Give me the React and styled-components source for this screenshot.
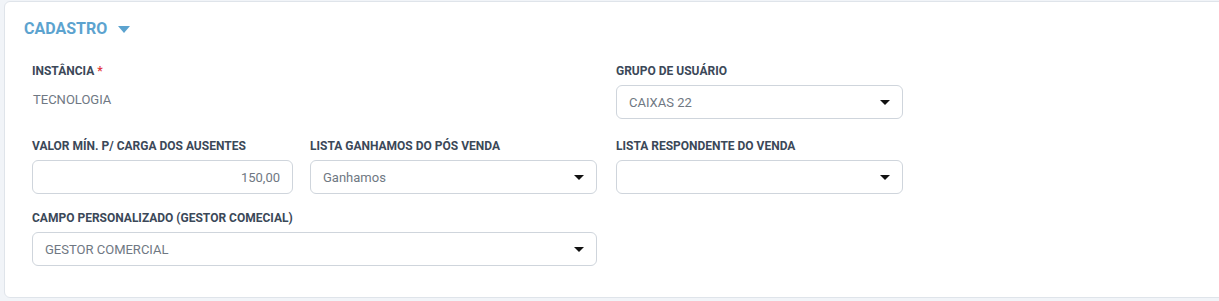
import React from 'react';
import styled, { createGlobalStyle } from 'styled-components';

const GlobalStyle = createGlobalStyle`
  html, body {
    margin: 0;
    padding: 0;
    background: #f1f4f8;
    font-family: Roboto, "Liberation Sans", Arial, sans-serif;
    overflow: hidden;
  }
`;

function Field({ label, required, children, width }) {
  return (
    <FieldWrap $width={width}>
      <Label>
        {label}
        {required && <Required> *</Required>}
      </Label>
      {children}
    </FieldWrap>
  );
}

function Select({ value }) {
  return (
    <SelectBox>
      <SelectValue>{value}</SelectValue>
      <Arrow />
    </SelectBox>
  );
}

function App() {
  return (
    <>
      <GlobalStyle />
      <Card>
        <Header>
          <Title>CADASTRO</Title>
          <Caret />
        </Header>

        <Row $mb={20}>
          <Field label="INSTÂNCIA" required width={565}>
            <StaticValue>TECNOLOGIA</StaticValue>
          </Field>
          <Field label="GRUPO DE USUÁRIO" width={287}>
            <Select value="CAIXAS 22" />
          </Field>
        </Row>

        <Row $mb={17}>
          <Half>
            <Field label="VALOR MÍN. P/ CARGA DOS AUSENTES" width={261}>
              <TextInput>150,00</TextInput>
            </Field>
            <Field label="LISTA GANHAMOS DO PÓS VENDA" width={287}>
              <Select value="Ganhamos" />
            </Field>
          </Half>
          <Field label="LISTA RESPONDENTE DO VENDA" width={287}>
            <Select value="" />
          </Field>
        </Row>

        <Row $mb={0}>
          <Field label="CAMPO PERSONALIZADO (GESTOR COMECIAL)" width={565}>
            <Select value="GESTOR COMERCIAL" />
          </Field>
        </Row>
      </Card>
    </>
  );
}

export default App;

const Card = styled.div`
  box-sizing: border-box;
  width: 1240px;
  height: 297px;
  margin: 1px 0 0 4px;
  padding: 17px 0 0 27px;
  background: #ffffff;
  border: 1px solid #dfe4ea;
  border-radius: 6px;
`;

const Header = styled.div`
  display: flex;
  align-items: center;
  gap: 11px;
  margin-left: -8px;
  margin-bottom: 25px;
  height: 20px;
`;

const Title = styled.span`
  font-size: 16px;
  font-weight: 700;
  color: #5ca3cf;
  line-height: 20px;
`;

const Caret = styled.span`
  width: 0;
  height: 0;
  margin-top: 1px;
  border-left: 6px solid transparent;
  border-right: 6px solid transparent;
  border-top: 7px solid #5ca3cf;
`;

const Row = styled.div`
  display: flex;
  gap: 19px;
  margin-bottom: ${p => p.$mb}px;
`;

const Half = styled.div`
  display: flex;
  gap: 17px;
  width: 565px;
`;

const FieldWrap = styled.div`
  display: flex;
  flex-direction: column;
  width: ${p => p.$width}px;
`;

const Label = styled.label`
  font-size: 12px;
  font-weight: 700;
  line-height: 14px;
  color: #3b4858;
  margin-bottom: 7px;
  white-space: nowrap;
`;

const Required = styled.span`
  color: #e0383e;
`;

const StaticValue = styled.div`
  font-size: 13px;
  line-height: 34px;
  height: 34px;
  margin-top: -2px;
  padding-left: 1px;
  color: #6f7883;
`;

const boxBase = `
  box-sizing: border-box;
  height: 34px;
  border: 1px solid #cfd5dc;
  border-radius: 6px;
  background: #ffffff;
  font-size: 13px;
  color: #6f7883;
  display: flex;
  align-items: center;
`;

const TextInput = styled.div`
  ${boxBase}
  justify-content: flex-end;
  padding: 0 12px;
`;

const SelectBox = styled.div`
  ${boxBase}
  justify-content: space-between;
  padding: 0 12px;
`;

const SelectValue = styled.span`
  white-space: nowrap;
`;

const Arrow = styled.span`
  width: 0;
  height: 0;
  border-left: 5px solid transparent;
  border-right: 5px solid transparent;
  border-top: 5px solid #111111;
`;
